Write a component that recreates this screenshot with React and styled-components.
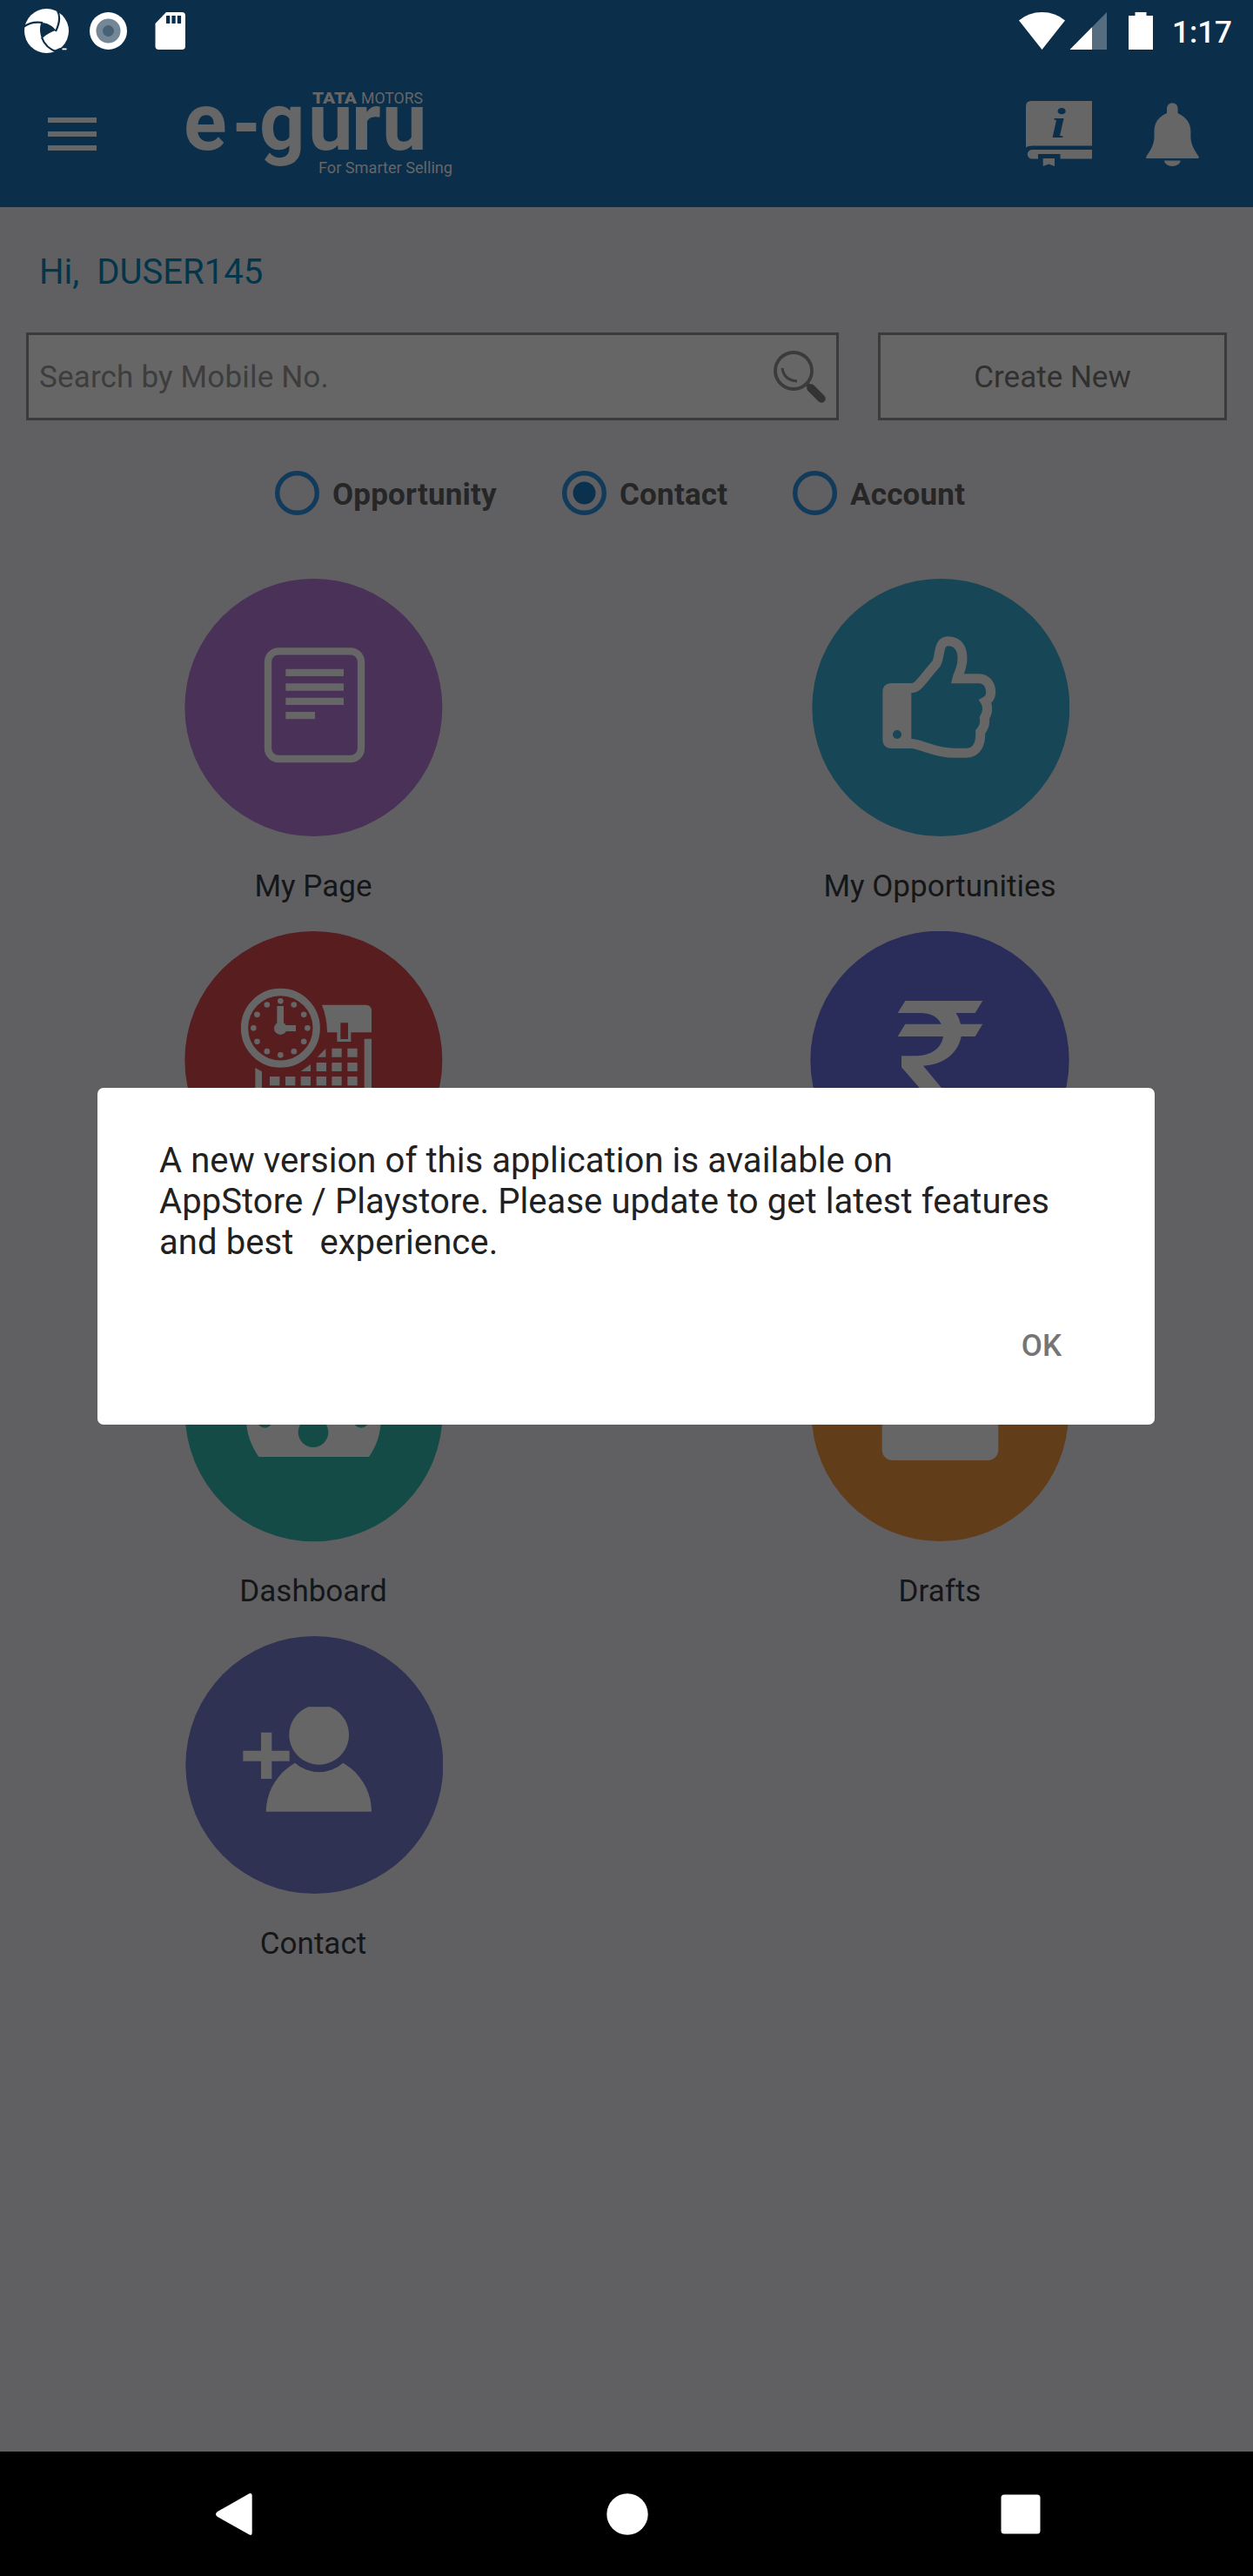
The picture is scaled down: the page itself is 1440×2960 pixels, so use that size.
import React from "react";
import styled, { createGlobalStyle } from "styled-components";

const GlobalStyle = createGlobalStyle`
  * { box-sizing: border-box; }
  body { margin: 0; background: #606062; font-family: Roboto, "Liberation Sans", sans-serif; }
  svg { display: block; flex: none; }
  p { margin: 0; }
`;

const ink = "#666666";
const navy = "#0b2e4a";

const Screen = styled.div`
  position: relative;
  display: flex;
  flex-direction: column;
  width: 1440px;
  height: 2960px;
  background: #606062;
  overflow: hidden;
`;

const StatusBar = styled.div`
  display: flex;
  align-items: center;
  justify-content: space-between;
  height: 71px;
  padding: 0 24px 0 27px;
  background: ${navy};
`;

const Cluster = styled.div`
  display: flex;
  align-items: center;
`;

const Clock = styled.span`
  margin-left: 21px;
  color: #fff;
  font-size: 35px;
  font-weight: 500;
  line-height: 41px;
  padding-top: 3px;
`;

const Header = styled.header`
  display: flex;
  align-items: flex-start;
  height: 167px;
  padding: 29px 61px 0 55px;
  background: ${navy};
`;

const MenuButton = styled.div`
  display: flex;
  flex-direction: column;
  gap: 10px;
  width: 56px;
  margin-top: 35px;
`;

const MenuBar = styled.span`
  height: 6px;
  background: ${ink};
`;

const Logo = styled.svg`
  margin-left: 97px;
  fill: ${ink};
  overflow: visible;
`;

const HeaderIcons = styled.div`
  display: flex;
  gap: 60px;
  margin: 15px 0 0 auto;
`;

const Content = styled.main`
  flex: 1;
`;

const Greeting = styled.p`
  padding: 51px 0 0 45px;
  color: #03364a;
  font-size: 40px;
  line-height: 47px;
  letter-spacing: 0.05px;
  white-space: pre;
`;

const SearchRow = styled.div`
  display: flex;
  gap: 45px;
  padding: 46px 30px 0;
`;

const Field = styled.div`
  display: flex;
  align-items: center;
  justify-content: ${(p) => (p.$center ? "center" : "space-between")};
  width: ${(p) => p.$width}px;
  height: 101px;
  padding: 0 12px 0 12px;
  border: 3px solid #3a3a3a;
  background: #666;
  color: ${(p) => p.$color};
  font-size: 35px;
  line-height: 41px;
  letter-spacing: ${(p) => (p.$center ? 0 : 0.17)}px;
`;

const FieldText = styled.span`
  padding-top: 2px;
`;

const RadioRow = styled.div`
  display: flex;
  padding: 58px 0 0 316px;
`;

const RadioOption = styled.div`
  display: flex;
  align-items: center;
  width: ${(p) => p.$width}px;
  height: 51px;
  gap: 15px;
  color: #262626;
  font-size: 35px;
  font-weight: 700;
  line-height: 41px;
  letter-spacing: 0.2px;
`;

const RadioLabel = styled.span`
  padding-top: 3px;
`;

const TileGrid = styled.div`
  display: grid;
  grid-template-columns: 720px 720px;
  grid-auto-rows: 405px;
  padding-top: 73px;
`;

const Tile = styled.div`
  display: flex;
  flex-direction: column;
  align-items: center;
`;

const TileLabel = styled.span`
  margin-top: 35px;
  color: #151618;
  font-size: 35px;
  line-height: 41px;
`;

const Overlay = styled.div`
  position: absolute;
  top: 70px;
  right: 0;
  bottom: 143px;
  left: 0;
  display: flex;
  align-items: center;
  justify-content: center;
  padding-right: 1px;
`;

const Dialog = styled.div`
  display: flex;
  flex-direction: column;
  width: 1215px;
  height: 387px;
  padding: 60px 72px 0 71px;
  border-radius: 7px;
  background: #fff;
`;

const Message = styled.p`
  color: #212121;
  font-size: 40px;
  line-height: 47px;
  letter-spacing: 0.08px;
  white-space: pre;
`;

const OkButton = styled.button`
  align-self: flex-end;
  margin: 75px 35px 0 0;
  padding: 0;
  border: 0;
  background: none;
  color: #757575;
  font: 500 35px/41px Roboto, "Liberation Sans", sans-serif;
`;

const NavBar = styled.nav`
  display: flex;
  align-items: center;
  justify-content: space-between;
  height: 143px;
  padding: 0 244px 0 247px;
  background: #000;
`;

const CircleTile = ({ color, x = 93, y = 75, cx, cy, r = 444, children }) => (
  <svg width="298" height="298" viewBox={`${x} ${y} 894 894`} fill={ink}>
    <circle cx={cx ?? x + 447} cy={cy ?? y + 445} r={r} fill={color} />
    {children}
  </svg>
);

const PageIcon = () => (
  <CircleTile color="#493157" cx={541} cy={519}>
    <rect x="384" y="325" width="321" height="371" rx="36" fill="none" stroke={ink} strokeWidth="25" />
    <path d="M445 386H645V411H445zM445 436H645V461H445zM445 485H645V510H445zM445 534H546V559H445z" />
  </CircleTile>
);

const ThumbIcon = () => (
  <CircleTile color="#174656" x={153} cx={604} cy={519}>
    <path
      fillRule="evenodd"
      d="M435 435H502V660H435Q403 660 403 628V467Q403 435 435 435zM438 612a15 15 0 1 0 30 0a15 15 0 1 0-30 0z"
    />
    <path
      d="M498 452C525 454 532 432 588 368C597 352 596 335 602 314C607 296 618 289 630 290C668 292 678 320 678 350C678 385 664 402 660 419H735C765 419 777 447 776 468C775 485 768 492 757 498C767 515 767 533 754 555C758 575 751 590 740 603C742 645 728 674 692 676H650C580 676 540 645 498 643"
      fill="none"
      stroke={ink}
      strokeWidth="33"
    />
  </CircleTile>
);

const dots = Array.from({ length: 12 }, (_, i) => {
  const a = (i * Math.PI) / 6;
  return [427 + 93 * Math.sin(a), 394 - 93 * Math.cos(a)];
});

const cells = [561, 610, 659].flatMap((y) => [390, 444, 497, 551, 604, 658].map((x) => [x, y]));

const CalendarIcon = () => (
  <CircleTile color="#581d1f" y={60} cx={541} cy={504}>
    <circle cx="427" cy="394" r="124" fill="none" stroke={ink} strokeWidth="25" />
    {dots.map(([x, y]) => (
      <circle key={`${x}${y}`} cx={x} cy={y} r="10" />
    ))}
    <circle cx="427" cy="395" r="22" />
    <path d="M415 318H438V394H415zM427 384H480V405H427z" />
    <path fillRule="evenodd" d="M570 314H720Q741 314 741 335V409H670V441H622V409H588Q587 356 570 314zM634 376H660V432H634z" />
    <path d="M716 431H741V730H716zM340 531L363 544V730H340zM583 464V494H554zM531 519V543H497z" />
    <path d="M604 464h34v30h-34zM658 464h34v30h-34zM551 513h34v30h-34zM604 513h34v30h-34zM658 513h34v30h-34z" />
    {cells.map(([x, y]) => (
      <rect key={`${x}-${y}`} x={x} y={y} width="34" height="31" />
    ))}
  </CircleTile>
);

const RupeeIcon = () => (
  <CircleTile color="#2a2d59" x={153} y={60} cx={600} cy={505} r={446}>
    <path d="M481 300H748L722 342H656Q668 360 672 380H748L722 423H674C662 487 605 521 543 524L672 680H600L468 529V490H520C575 488 607 460 612 423H455L481 380H605C592 352 562 342 535 342H455z" />
  </CircleTile>
);

const DashboardIcon = () => (
  <CircleTile color="#154b46" y={75} cx={542} cy={520}>
    <path
      fillRule="evenodd"
      d="M540 330C400 330 308 430 308 530C308 595 328 635 352 672H732C757 635 774 595 774 530C774 430 680 330 540 330zM488 587a52 52 0 1 0 104 0a52 52 0 1 0-104 0zM346 545a27 27 0 1 0 54 0a27 27 0 1 0-54 0zM678 545a27 27 0 1 0 54 0a27 27 0 1 0-54 0z"
    />
  </CircleTile>
);

const DraftsIcon = () => (
  <CircleTile color="#623d1a" x={153} y={75} cx={601} cy={520} r={443}>
    <rect x="401" y="300" width="401" height="384" rx="36" />
  </CircleTile>
);

const ContactIcon = () => (
  <CircleTile color="#303254" y={60} cx={544} cy={504}>
    <path d="M298 455H360V392H397V455H458V491H397V552H360V491H298z" />
    <path d="M523 304H597A103 103 0 1 1 523 304z" />
    <path d="M377 665C379 595 415 533 477 497A125 125 0 0 0 643 497C703 532 741 595 741 665z" />
  </CircleTile>
);

const tiles = [
  { Icon: PageIcon, label: "My Page" },
  { Icon: ThumbIcon, label: "My Opportunities" },
  { Icon: CalendarIcon },
  { Icon: RupeeIcon },
  { Icon: DashboardIcon, label: "Dashboard" },
  { Icon: DraftsIcon, label: "Drafts" },
  { Icon: ContactIcon, label: "Contact" },
];

const Radio = ({ label, width, checked }) => (
  <RadioOption $width={width}>
    <svg width="51" height="51" viewBox="0 0 51 51">
      <circle cx="25.5" cy="25.5" r="22.8" fill="none" stroke="#123a5a" strokeWidth="5.4" />
      {checked && <circle cx="25.5" cy="25.5" r="13" fill="#0c314f" />}
    </svg>
    <RadioLabel>{label}</RadioLabel>
  </RadioOption>
);

export default function App() {
  return (
    <>
      <GlobalStyle />
      <Screen>
        <StatusBar>
          <Cluster>
            <svg width="190" height="71" viewBox="27 0 190 71">
              <circle cx="53.5" cy="35.5" r="25.5" fill="#fff" />
              <path d="M47.3 26C55 26.500 60 29.500 64.300 35C59 36.500 54 39 48.200 44.300C45.500 38 45.500 31 47.300 26z" fill={navy} />
              <path
                d="M66 12Q71 22 64 36M27 31Q36 24 49 26M48 43Q52 55 66 60"
                fill="none"
                stroke={navy}
                strokeWidth="2.2"
              />
              <path d="M62 58L69 55L73 60L68 64z" fill={navy} />
              <path d="M71.500 55.500h5v1.800h-5z" fill="#fff" />
              <circle cx="124.500" cy="35.500" r="21.500" fill="#fff" />
              <circle cx="124.500" cy="35.500" r="14" fill="#748797" />
              <circle cx="124.500" cy="35.500" r="6.500" fill="#486175" />
              <path d="M191 14H209Q213 14 213 18V53Q213 57 209 57H182.500Q178.500 57 178.500 53V27z" fill="#fff" />
              <path d="M191 18h4.300v9h-4.300zM197.400 18h4.300v9h-4.300zM203.800 18h4.300v9h-4.300z" fill={navy} />
            </svg>
          </Cluster>
          <Cluster>
            <svg width="156" height="71" viewBox="1171 0 156 71">
              <path d="M1172 23.500Q1183 14 1198.500 14T1225 23.500L1198.500 57z" fill="#fff" />
              <path d="M1273 14V57H1230.500z" fill="#566d80" />
              <path d="M1256 31.200V57H1230.500z" fill="#fff" />
              <path d="M1305.500 14H1318.500V18H1326V57H1298V18H1305.500z" fill="#fff" />
            </svg>
            <Clock>1:17</Clock>
          </Cluster>
        </StatusBar>
        <Header>
          <MenuButton>
            <MenuBar />
            <MenuBar />
            <MenuBar />
          </MenuButton>
          <Logo width="320" height="110" viewBox="208 100 320 110" fontFamily="Roboto, sans-serif">
            <text x="359" y="119" fontSize="17.500" fontWeight="900" textLength="51" lengthAdjust="spacingAndGlyphs">TATA</text>
            <text x="415" y="119" fontSize="17.500" textLength="71" lengthAdjust="spacingAndGlyphs">MOTORS</text>
            <text y="172" fontSize="92" fontWeight="700">
              <tspan x="211">e</tspan>
              <tspan x="266" y="170" fontSize="77" fontWeight="900">-</tspan>
              <tspan x="298 354 404 439" y="172">guru</tspan>
            </text>
            <text x="366" y="199" fontSize="18.500" textLength="154" lengthAdjust="spacingAndGlyphs">For Smarter Selling</text>
          </Logo>
          <HeaderIcons>
            <svg width="77" height="78" viewBox="1179 115 77 78" fill={ink}>
              <path d="M1185 116H1255V167.500H1187Q1181 167.500 1179 169.500V122Q1179 116 1185 116z" />
              <path d="M1186 172H1255V182.500H1218.500V177H1193V182.500H1186A5.250 5.250 0 0 1 1186 172z" />
              <path d="M1198.700 182H1212V191L1205.300 188.500L1198.700 191z" />
              <text x="1208" y="157.500" fontFamily="Liberation Serif, serif" fontStyle="italic" fontWeight="700" fontSize="49" fill={navy} textLength="17" lengthAdjust="spacingAndGlyphs">i</text>
            </svg>
            <svg width="63" height="78" viewBox="1316 115 63 78" fill={ink}>
              <path d="M1341 130V124.500A6.300 6.300 0 0 1 1353.600 124.500V130C1364 135 1368.400 142 1368.400 151V158C1369 168 1374 174 1377.700 180Q1378.300 182 1376 182H1318.500Q1316.500 182 1317.300 180C1321 174 1326 168 1326.500 158V150C1327 140 1332 134 1341 130z" />
              <path d="M1338 184.500H1356.700A9.300 6.500 0 0 1 1338 184.500z" />
            </svg>
          </HeaderIcons>
        </Header>
        <Content>
          <Greeting>{"Hi,  DUSER145"}</Greeting>
          <SearchRow>
            <Field $width={934} $color="#3d3d3d">
              <FieldText>Search by Mobile No.</FieldText>
              <svg width="60" height="60" viewBox="0 0 60 60" fill="none" stroke="#3b3b3b">
                <circle cx="23" cy="23" r="21" strokeWidth="3.800" />
                <path d="M10 20Q12 34 27 35" strokeWidth="3" />
                <path d="M37 37L42 42" strokeWidth="5" />
                <path d="M43 43L55 55" strokeWidth="9.500" strokeLinecap="round" stroke="#333" />
              </svg>
            </Field>
            <Field $width={401} $color="#303030" $center>
              <FieldText>Create New</FieldText>
            </Field>
          </SearchRow>
          <RadioRow>
            <Radio label="Opportunity" width={330} />
            <Radio label="Contact" width={265} checked />
            <Radio label="Account" width={240} />
          </RadioRow>
          <TileGrid>
            {tiles.map(({ Icon, label }, i) => (
              <Tile key={i}>
                <Icon />
                {label && <TileLabel>{label}</TileLabel>}
              </Tile>
            ))}
          </TileGrid>
        </Content>
        <NavBar>
          <svg width="44" height="50" viewBox="247 2863.500 44 50" fill="#fff">
            <path d="M286.500 2864.800Q289.700 2863.500 289.700 2867V2910Q289.700 2913.500 286.500 2912L250 2891.500Q246 2888.500 250 2885.500z" />
          </svg>
          <svg width="48" height="48" viewBox="0 0 48 48" fill="#fff">
            <circle cx="24" cy="24" r="23.700" />
          </svg>
          <svg width="46" height="46" viewBox="0 0 46 46" fill="#fff">
            <rect x="0.500" y="0.500" width="45" height="45" rx="3.500" />
          </svg>
        </NavBar>
        <Overlay>
          <Dialog>
            <Message>
              {"A new version of this application is available on\nAppStore / Playstore. Please update to get latest features\nand best   experience."}
            </Message>
            <OkButton>OK</OkButton>
          </Dialog>
        </Overlay>
      </Screen>
    </>
  );
}
